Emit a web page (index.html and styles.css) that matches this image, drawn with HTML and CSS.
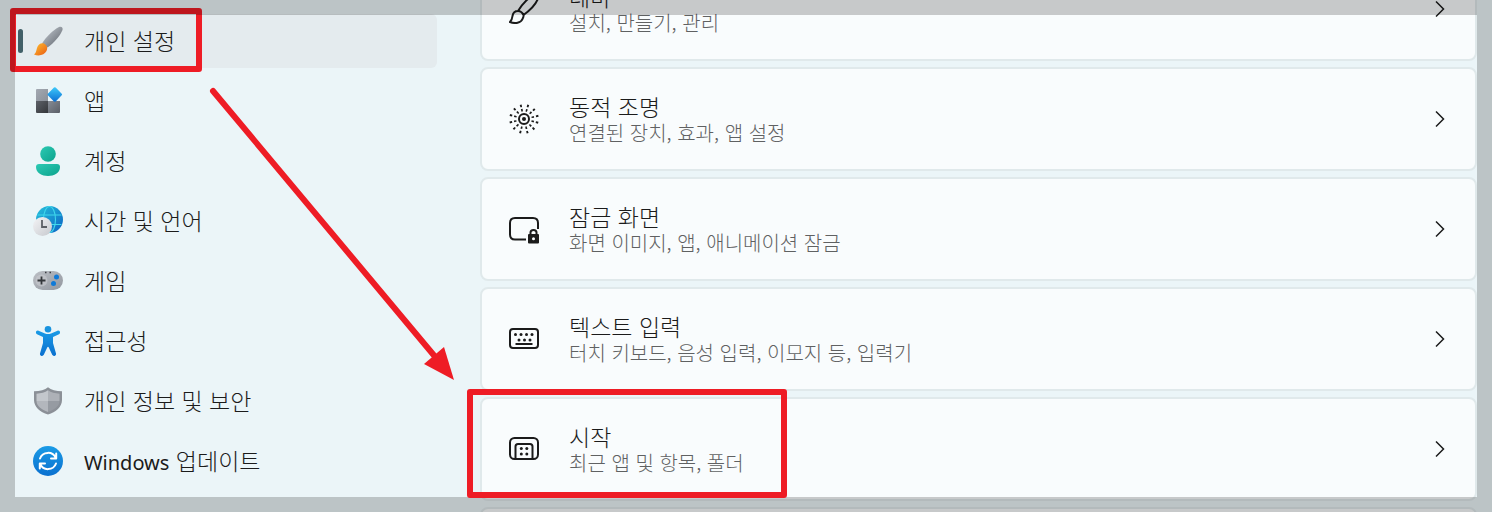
FILE: index.html
```html
<!DOCTYPE html>
<html lang="ko">
<head>
    <meta charset="UTF-8">
    <meta name="viewport" content="width=device-width, initial-scale=1.0">
    <title>개인 설정</title>
    <link rel="stylesheet" href="styles.css">
</head>
<body>
    <div class="window">
        <!-- Sidebar -->
        <nav class="sidebar">
            <a href="#" class="nav-item active">
                <svg class="nav-icon" viewBox="0 0 30 30">
                    <defs>
                        <linearGradient id="handle" x1="0" y1="0" x2="1" y2="1"><stop offset="0.2" stop-color="#b4bac1"/><stop offset="0.8" stop-color="#6f757d"/></linearGradient>
                        <linearGradient id="bristle" x1="0" y1="0" x2="1" y2="1"><stop offset="0" stop-color="#fdc02f"/><stop offset="1" stop-color="#ea5a13"/></linearGradient>
                    </defs>
                    <path d="M9 17.500C13 11 20 4 26 1C29 .2 30 2 29.500 4C27 10 21 17 14.500 21.500Z" fill="url(#handle)"/>
                    <path d="M1 28.500C3 27 3 25.500 4 22C5 18.500 8 16.500 11 17.500C14 19 15 22 13.500 25C11.500 29 6 30.500 1 28.500Z" fill="url(#bristle)"/>
                </svg>
                <span class="nav-label">개인 설정</span>
            </a>
            <a href="#" class="nav-item">
                <svg class="nav-icon" viewBox="0 0 30 30">
                    <defs>
                        <linearGradient id="tileA" x1="0" y1="0" x2="1" y2="1"><stop offset="0" stop-color="#a3a9b2"/><stop offset="1" stop-color="#8a9099"/></linearGradient>
                        <linearGradient id="tileB" x1="0" y1="0" x2="1" y2="1"><stop offset="0" stop-color="#5d6168"/><stop offset="1" stop-color="#34373b"/></linearGradient>
                        <linearGradient id="tileC" x1="0" y1="0" x2="1" y2="1"><stop offset="0" stop-color="#868c95"/><stop offset="1" stop-color="#5a5f67"/></linearGradient>
                        <linearGradient id="diamond" x1="0" y1="0" x2="1" y2="1"><stop offset="0" stop-color="#3ecbfb"/><stop offset="1" stop-color="#0a6cd2"/></linearGradient>
                    </defs>
                    <path d="M4 3h11v12H3V4q0-1 1-1z" fill="url(#tileA)"/>
                    <path d="M3 15h12v12H4q-1 0-1-1z" fill="url(#tileB)"/>
                    <path d="M15 15h12v11q0 1-1 1H15z" fill="url(#tileC)"/>
                    <rect x="16.300" y="3" width="11" height="11" rx="1.200" transform="rotate(45 21.800 8.500)" fill="url(#diamond)"/>
                </svg>
                <span class="nav-label">앱</span>
            </a>
            <a href="#" class="nav-item">
                <svg class="nav-icon" viewBox="0 0 30 30">
                    <defs>
                        <linearGradient id="person" x1="0" y1="0" x2="1" y2="1"><stop offset="0" stop-color="#2ccab4"/><stop offset="1" stop-color="#0ca28c"/></linearGradient>
                    </defs>
                    <circle cx="15" cy="8" r="7.800" fill="url(#person)"/>
                    <path d="M6 18h18q3 0 3 3c0 6-6 9-12 9S3 27 3 21q0-3 3-3z" fill="url(#person)"/>
                </svg>
                <span class="nav-label">계정</span>
            </a>
            <a href="#" class="nav-item">
                <svg class="nav-icon" viewBox="0 0 30 30">
                    <defs>
                        <linearGradient id="globe" x1="0" y1="0" x2="1" y2="1"><stop offset="0" stop-color="#28c3dc"/><stop offset="1" stop-color="#0a62c4"/></linearGradient>
                        <linearGradient id="clock" x1="0" y1="0" x2="1" y2="1"><stop offset="0" stop-color="#f4f4f6"/><stop offset="1" stop-color="#c6c9ce"/></linearGradient>
                    </defs>
                    <circle cx="16.500" cy="13.500" r="13.500" fill="url(#globe)"/>
                    <g fill="none" stroke="#3fd8ec" stroke-width="1.100">
                        <ellipse cx="16.500" cy="13.500" rx="6" ry="13"/>
                        <path d="M4.500 9h24M4.500 18.500h24"/>
                    </g>
                    <circle cx="9.500" cy="20.500" r="9.500" fill="url(#clock)"/>
                    <path d="M9 14v7h5" fill="none" stroke="#5c6066" stroke-width="1.800"/>
                </svg>
                <span class="nav-label">시간 및 언어</span>
            </a>
            <a href="#" class="nav-item">
                <svg class="nav-icon" viewBox="0 0 30 30">
                    <defs>
                        <linearGradient id="pad" x1="0" y1="0" x2="1" y2="1"><stop offset="0" stop-color="#bcc0c6"/><stop offset="1" stop-color="#92979f"/></linearGradient>
                    </defs>
                    <rect x="0" y="5" width="30" height="19" rx="9.500" fill="url(#pad)"/>
                    <circle cx="8.500" cy="14.500" r="6" fill="#c9ccd1" opacity=".6"/>
                    <path d="M8.500 10.500v8M4.500 14.500h8" stroke="#34373b" stroke-width="1.800"/>
                    <circle cx="23.500" cy="11" r="2.500" fill="#0f7ad8"/>
                    <circle cx="20.500" cy="17.500" r="2.500" fill="#0f7ad8"/>
                    <path d="M12 6.500h1.500M16.500 6.500h1.500" stroke="#3a3d42" stroke-width="1.300"/>
                </svg>
                <span class="nav-label">게임</span>
            </a>
            <a href="#" class="nav-item">
                <svg class="nav-icon" viewBox="0 0 30 30">
                    <defs>
                        <linearGradient id="access" x1="0" y1="0" x2="0" y2="1"><stop offset="0" stop-color="#1a9be6"/><stop offset="1" stop-color="#0a70cf"/></linearGradient>
                    </defs>
                    <circle cx="15" cy="3.300" r="3.300" fill="#1893df"/>
                    <path d="M5.500 4.700L12 7.500Q15 8.500 18 7.500L24.500 4.700C27 4 28 7 26 8.200L20 11V17L23 27.500C23.500 30 20.500 31 19.200 28.800L15.800 21.500Q15 20 14.200 21.500L10.800 28.800C9.500 31 6.500 30 7 27.500L10 17V11L4 8.200C2 7 3 4 5.500 4.700Z" fill="url(#access)"/>
                </svg>
                <span class="nav-label">접근성</span>
            </a>
            <a href="#" class="nav-item">
                <svg class="nav-icon" viewBox="0 0 30 30">
                    <path d="M15 1.200C18 4 23 5.200 29 5.200V14C29 21 23 26 15 28.500C7 26 1 21 1 14V5.200C7 5.200 12 4 15 1.200Z" fill="#8b9097"/>
                    <path d="M15 4.300C18 6.500 22 7.500 26.500 7.700V15H15Z" fill="#adb1b7"/>
                    <path d="M15 4.300C12 6.500 8 7.500 3.500 7.700V15H15Z" fill="#c3c7cc"/>
                    <path d="M3.500 15H15V26C8.500 23.500 3.500 20 3.500 15Z" fill="#b3b7bd"/>
                    <path d="M26.500 15H15V26C21.500 23.500 26.500 20 26.500 15Z" fill="#969ba2"/>
                </svg>
                <span class="nav-label">개인 정보 및 보안</span>
            </a>
            <a href="#" class="nav-item">
                <svg class="nav-icon" viewBox="0 0 30 30">
                    <circle cx="15" cy="15" r="15" fill="url(#access)"/>
                    <g fill="none" stroke="#fff" stroke-width="2" stroke-linecap="round" stroke-linejoin="round">
                        <path d="M7 12.500A8.500 8.500 0 0 1 22.800 12M23.200 7.500V12.500H18"/>
                        <path d="M23 17.500A8.500 8.500 0 0 1 7.200 18M6.800 22.500V17.500H12"/>
                    </g>
                </svg>
                <span class="nav-label"><span class="latin">Windows</span> 업데이트</span>
            </a>
        </nav>

        <!-- Settings list -->
        <main class="settings">
            <a href="#" class="card">
                <svg class="card-icon" viewBox="0 0 30 30">
                    <path d="M9 17C14 9 21 2 26 1C29 .5 30 2 29 4.500C27 10 20 17 14.500 21M9 17C5 17 4 19 3.500 22Q3 26 1 28C6 30 12 29 13.500 25Q15 22 14.500 21C13 18 11 17 9 17Z"/>
                </svg>
                <span class="card-text">
                    <span class="card-title">테마</span>
                    <span class="card-desc">설치, 만들기, 관리</span>
                </span>
                <svg class="chevron" viewBox="0 0 10 18"><path d="M1 1.500L8.500 9L1 16.500"/></svg>
            </a>
            <a href="#" class="card">
                <svg class="card-icon" viewBox="0 0 30 30">
                    <circle cx="15" cy="15" r="5"/>
                    <circle cx="15" cy="15" r="2" class="solid"/>
                    <g stroke-width="2.500">
                        <circle cx="15" cy="15" r="9" stroke-dasharray="1.600 3.112" stroke-dashoffset="-1.556"/>
                        <circle cx="15" cy="15" r="13.500" stroke-dasharray="1.800 5.269" stroke-dashoffset="-2.634"/>
                    </g>
                </svg>
                <span class="card-text">
                    <span class="card-title">동적 조명</span>
                    <span class="card-desc">연결된 장치, 효과, 앱 설정</span>
                </span>
                <svg class="chevron" viewBox="0 0 10 18"><path d="M1 1.500L8.500 9L1 16.500"/></svg>
            </a>
            <a href="#" class="card">
                <svg class="card-icon" viewBox="0 0 30 30">
                    <path d="M17 25.500H6Q1 25.500 1 20.500V9Q1 4 6 4H24Q29 4 29 9V15"/>
                    <path d="M21.500 21V18.500Q21.500 16 24.500 16T27.500 18.500V21"/>
                    <path class="solid" fill-rule="evenodd" d="M20 20H29Q30 20 30 21V28.500Q30 29.500 29 29.500H20Q19 29.500 19 28.500V21Q19 20 20 20ZM24.500 23.200A1.500 1.500 0 1 0 24.500 26.200A1.500 1.500 0 1 0 24.500 23.200Z"/>
                </svg>
                <span class="card-text">
                    <span class="card-title">잠금 화면</span>
                    <span class="card-desc">화면 이미지, 앱, 애니메이션 잠금</span>
                </span>
                <svg class="chevron" viewBox="0 0 10 18"><path d="M1 1.500L8.500 9L1 16.500"/></svg>
            </a>
            <a href="#" class="card">
                <svg class="card-icon" viewBox="0 0 30 30">
                    <rect x="1" y="5" width="28" height="19" rx="3"/>
                    <path d="M6.500 20H23.500"/>
                    <g class="solid">
                        <circle cx="6.500" cy="10.500" r="1.500"/><circle cx="12" cy="10.500" r="1.500"/><circle cx="17.500" cy="10.500" r="1.500"/><circle cx="23" cy="10.500" r="1.500"/>
                        <circle cx="10" cy="16" r="1.500"/><circle cx="15.500" cy="16" r="1.500"/><circle cx="21" cy="16" r="1.500"/>
                    </g>
                </svg>
                <span class="card-text">
                    <span class="card-title">텍스트 입력</span>
                    <span class="card-desc">터치 키보드, 음성 입력, 이모지 등, 입력기</span>
                </span>
                <svg class="chevron" viewBox="0 0 10 18"><path d="M1 1.500L8.500 9L1 16.500"/></svg>
            </a>
            <a href="#" class="card">
                <svg class="card-icon" viewBox="0 0 30 30">
                    <rect x="1" y="4" width="28" height="21" rx="4.500"/>
                    <path d="M6.500 25V12.500Q6.500 10 9 10H21Q23.500 10 23.500 12.500V25"/>
                    <g class="solid">
                        <circle cx="12.300" cy="14.500" r="1.500"/><circle cx="17.800" cy="14.500" r="1.500"/>
                        <circle cx="12.300" cy="20" r="1.500"/><circle cx="17.800" cy="20" r="1.500"/>
                    </g>
                </svg>
                <span class="card-text">
                    <span class="card-title">시작</span>
                    <span class="card-desc">최근 앱 및 항목, 폴더</span>
                </span>
                <svg class="chevron" viewBox="0 0 10 18"><path d="M1 1.500L8.500 9L1 16.500"/></svg>
            </a>
            <a href="#" class="card"></a>
        </main>

        <!-- Guide marks -->
        <div class="mark mark-nav"></div>
        <div class="shade"></div>
        <div class="mark mark-card"></div>
        <svg class="arrow" viewBox="0 0 250 300">
            <path d="M8 6L232 274" stroke="#ee1c25" stroke-width="6" stroke-linecap="round"/>
            <path d="M249 295L219 279L239 262Z" fill="#ee1c25"/>
        </svg>
    </div>
</body>
</html>
```
FILE: styles.css
```css
* {
    box-sizing: border-box;
}
body {
    margin: 0;
    font-family: "Noto Sans CJK KR", sans-serif;
    font-weight: 300;
    color: #1b1b1b;
}
a {
    color: inherit;
    text-decoration: none;
}
.window {
    position: relative;
    display: flex;
    gap: 43px;
    height: 100vh;
    padding: 0 15px;
    overflow: hidden;
    background: #ebf5f8;
}

/* Sidebar */
.sidebar {
    display: flex;
    flex-direction: column;
    flex: 0 0 422px;
    gap: 6px;
    padding-top: 14px;
}
.nav-item {
    position: relative;
    display: flex;
    align-items: center;
    flex: 0 0 54px;
    gap: 21px;
    padding-left: 18px;
    border-radius: 6px;
}
.nav-item.active {
    background: #e4ebee;
}
.nav-item.active::before {
    content: "";
    position: absolute;
    left: 3px;
    top: 15px;
    width: 5px;
    height: 24px;
    border-radius: 3px;
    background: #426068;
}
.nav-icon {
    width: 30px;
    height: 30px;
}
.nav-label {
    padding-bottom: 3px;
    font-size: 23px;
    line-height: 28px;
}
.latin {
    font-family: "Noto Sans", sans-serif;
    font-size: 20px;
    font-weight: 400;
    line-height: 1;
}

/* Settings list */
.settings {
    display: flex;
    flex-direction: column;
    flex: 1;
    gap: 6px;
    margin-top: -43px;
}
.card {
    display: flex;
    align-items: center;
    flex: 0 0 104px;
    padding: 0 30px 0 27px;
    border: 2px solid #e0e9eb;
    border-radius: 8px;
    background: #f9fcfd;
}
.card-icon {
    width: 30px;
    height: 30px;
    margin-right: 30px;
}
.card-icon,
.chevron {
    fill: none;
    stroke: #1b1b1b;
    stroke-width: 2;
}
.card-icon .solid {
    fill: #1b1b1b;
    stroke: none;
}
.card-text {
    display: flex;
    flex-direction: column;
    flex: 1;
    padding-bottom: 1px;
}
.card-title {
    font-size: 23px;
    line-height: 28px;
}
.card-desc {
    font-size: 20px;
    line-height: 26px;
    color: #5f6162;
}
.chevron {
    width: 10px;
    height: 18px;
    stroke-width: 1.5;
}

/* Guide marks */
.shade {
    position: absolute;
    inset: 0;
    border: 15px solid rgba(0, 0, 0, 0.2);
}
.mark {
    position: absolute;
    border: 6px solid #ee1c25;
    border-radius: 3px;
}
.mark-nav {
    left: 10px;
    top: 8px;
    width: 192px;
    height: 64px;
}
.mark-card {
    left: 467px;
    top: 389px;
    width: 320px;
    height: 109px;
}
.arrow {
    position: absolute;
    left: 205px;
    top: 85px;
    width: 250px;
    height: 300px;
}
```
